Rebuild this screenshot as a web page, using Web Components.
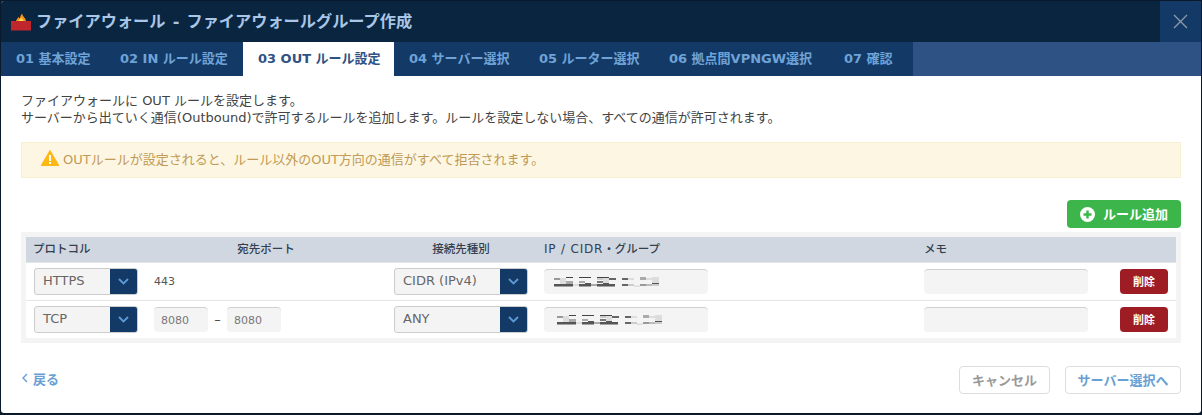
<!DOCTYPE html>
<html lang="ja">
<head>
<meta charset="utf-8">
<title>ファイアウォール</title>
<style>
  html, body { margin: 0; height: 100%; background: #0b1a2a; }
  body { padding: 1px 1px 2px; box-sizing: border-box; height: 415px; overflow: hidden;
    font-family: "DejaVu Sans", "Noto Sans CJK JP", sans-serif; font-size: 13px; color: #444; }
</style>
</head>
<body>
<fw-dialog heading="ファイアウォール - ファイアウォールグループ作成">
  <fw-tabs slot="tabs">
    <fw-tab>01 基本設定</fw-tab>
    <fw-tab>02 IN ルール設定</fw-tab>
    <fw-tab active>03 OUT ルール設定</fw-tab>
    <fw-tab>04 サーバー選択</fw-tab>
    <fw-tab>05 ルーター選択</fw-tab>
    <fw-tab>06 拠点間VPNGW選択</fw-tab>
    <fw-tab>07 確認</fw-tab>
  </fw-tabs>

  <fw-lead>ファイアウォールに OUT ルールを設定します。<br>サーバーから出ていく通信(Outbound)で許可するルールを追加します。ルールを設定しない場合、すべての通信が許可されます。</fw-lead>
  <fw-alert>OUTルールが設定されると、ルール以外のOUT方向の通信がすべて拒否されます。</fw-alert>
  <fw-toolbar><fw-button kind="add">ルール追加</fw-button></fw-toolbar>

  <rule-table>
    <rule-head></rule-head>
    <rule-row protocol="HTTPS" port="443" target="CIDR (IPv4)" shift="0"></rule-row>
    <rule-row protocol="TCP" from="8080" to="8080" target="ANY" shift="3"></rule-row>
  </rule-table>

  <fw-footer slot="footer">
    <fw-back slot="back">戻る</fw-back>
    <fw-button kind="plain">キャンセル</fw-button>
    <fw-button kind="next">サーバー選択へ</fw-button>
  </fw-footer>
</fw-dialog>

<script>
const COLUMNS = "120px 240px 150px 380px 204px 56px";

class FwDialog extends HTMLElement {
  constructor() {
    super();
    this.attachShadow({ mode: "open" });
  }
  connectedCallback() {
    this.shadowRoot.innerHTML = `
      <style>
        :host { display: flex; flex-direction: column; height: 100%; background: #fff; border-radius: 3px; overflow: hidden; }
        header { display: flex; height: 41px; background: #0a2540; }
        .title { flex: 1; display: flex; align-items: center; gap: 4px; padding-left: 9px; color: #a9c6e6; font-size: 16.200px; font-weight: 700; word-spacing: 1.500px; }
        .title span { padding-bottom: 3px; }
        .close { width: 41px; background: #133a66; display: flex; align-items: center; justify-content: center; }
        main { flex: 1; padding: 0 20px; display: flex; flex-direction: column; }
      </style>
      <header>
        <div class="title">
          <svg width="22" height="21" viewBox="0 0 22 21">
            <rect x="1" y="10" width="20" height="9.500" fill="#c0272d"/>
            <path d="M6 10 C6.500 8 8 8 8 6 C9 6.500 9.500 7 10 7.500 C10 5.500 11 4 12 2.500 C12.500 5 14 5.500 14.500 7 C15 7 15.500 8 16 10Z" fill="#f6921e"/>
            <path d="M8.500 10 C9 8.500 10.500 8.500 11 6.500 C12 8 13.500 8.500 13.500 10Z" fill="#ffe04a"/>
          </svg>
          <span>${this.getAttribute("heading")}</span>
        </div>
        <div class="close">
          <svg width="15" height="15" viewBox="0 0 15 15"><path d="M1 1 L14 14 M14 1 L1 14" stroke="#8d9aa8" stroke-width="1.300" fill="none"/></svg>
        </div>
      </header>
      <slot name="tabs"></slot>
      <main><slot></slot></main>
      <slot name="footer"></slot>
    `;
  }
}

class FwTabs extends HTMLElement {
  constructor() {
    super();
    this.attachShadow({ mode: "open" });
    this.shadowRoot.innerHTML = `
      <style>
        :host { display: flex; height: 34px; background: #2f5285; }
        .list { display: grid; grid-template-columns: 104px 138px 151px 130px 130px 175px 84px; background: #133a66; }
      </style>
      <div class="list"><slot></slot></div>
    `;
  }
}

class FwTab extends HTMLElement {
  constructor() {
    super();
    this.attachShadow({ mode: "open" });
    this.shadowRoot.innerHTML = `
      <style>
        :host { display: flex; align-items: center; padding: 0 0 3px 15px; font-size: 13px; font-weight: 700; color: #6fa3d8; white-space: nowrap; }
        :host([active]) { background: #fff; color: #2f5285; }
      </style>
      <slot></slot>
    `;
  }
}

class FwLead extends HTMLElement {
  constructor() {
    super();
    this.attachShadow({ mode: "open" });
    this.shadowRoot.innerHTML = `
      <style>
        :host { display: block; padding-top: 16px; font-size: 13px; line-height: 17px; color: #444; white-space: nowrap; }
      </style>
      <slot></slot>
    `;
  }
}

class FwAlert extends HTMLElement {
  constructor() {
    super();
    this.attachShadow({ mode: "open" });
    this.shadowRoot.innerHTML = `
      <style>
        :host { display: flex; align-items: center; gap: 4px; height: 36px; box-sizing: border-box; margin-top: 16px;
          padding: 0 0 4px 19px; background: #fdf6e3; border: 1px solid #faeed3; color: #c09a56; font-size: 13px; }
      </style>
      <svg width="18" height="16" viewBox="0 0 18 16">
        <path d="M9 0.500 L17.800 15.500 H0.200Z" fill="#fdb813" stroke="#fdb813" stroke-linejoin="round"/>
        <rect x="8" y="5" width="2" height="6" fill="#fff"/>
        <rect x="8" y="12" width="2" height="2" fill="#fff"/>
      </svg>
      <slot></slot>
    `;
  }
}

class FwToolbar extends HTMLElement {
  constructor() {
    super();
    this.attachShadow({ mode: "open" });
    this.shadowRoot.innerHTML = `
      <style>
        :host { display: flex; justify-content: flex-end; margin-top: 22px; }
      </style>
      <slot></slot>
    `;
  }
}

class FwButton extends HTMLElement {
  constructor() {
    super();
    this.attachShadow({ mode: "open" });
  }
  connectedCallback() {
    const plus = this.getAttribute("kind") === "add" ? `
      <svg width="15" height="15" viewBox="0 0 15 15">
        <circle cx="7.500" cy="7.500" r="7.500" fill="#fff"/>
        <path d="M7.500 3.500 V11.500 M3.500 7.500 H11.500" stroke="#3cb54a" stroke-width="2.400"/>
      </svg>` : "";
    this.shadowRoot.innerHTML = `
      <style>
        :host { display: inline-flex; align-items: center; justify-content: center; box-sizing: border-box; padding-bottom: 2px; font-size: 13px; font-weight: 700; border-radius: 4px; white-space: nowrap; }
        :host([kind="add"]) { width: 114px; height: 28px; gap: 8px; background: #3cb54a; color: #fff; }
        :host([kind="delete"]) { width: 48px; height: 25px; background: #9e1c23; color: #fff; font-size: 11px; }
        :host([kind="plain"]) { width: 91px; height: 28px; background: #fff; border: 1px solid #ddd; color: #999; }
        :host([kind="next"]) { width: 116px; height: 28px; margin-left: 15px; background: #fff; border: 1px solid #ddd; color: #6a9fd4; }
        svg { margin-top: 2px; }
      </style>
      ${plus}<slot></slot>
    `;
  }
}

class RuleTable extends HTMLElement {
  constructor() {
    super();
    this.attachShadow({ mode: "open" });
    this.shadowRoot.innerHTML = `
      <style>
        :host { display: block; margin-top: 4px; padding: 5px; background: #f4f4f4; }
      </style>
      <slot></slot>
    `;
  }
}

class RuleHead extends HTMLElement {
  constructor() {
    super();
    this.attachShadow({ mode: "open" });
    this.shadowRoot.innerHTML = `
      <style>
        :host { display: grid; grid-template-columns: ${COLUMNS}; align-items: center; height: 26px; box-sizing: border-box; padding-bottom: 3px;
          background: #d0d7e0; border-bottom: 1px solid #e2e6eb; font-size: 11.500px; font-weight: 500; color: #34404f; }
        div { padding-left: 7px; }
        .mid { text-align: center; padding: 0; }
        .ip { padding-left: 8px; }
        .wide { font-size: 12px; letter-spacing: 0.800px; }
      </style>
      <div>プロトコル</div>
      <div class="mid">宛先ポート</div>
      <div class="mid">接続先種別</div>
      <div class="ip"><span class="wide">IP / CIDR</span>・グループ</div>
      <div class="ip">メモ</div>
      <div></div>
    `;
  }
}

class FwSelect extends HTMLElement {
  constructor() {
    super();
    this.attachShadow({ mode: "open" });
    this.shadowRoot.innerHTML = `
      <style>
        :host { display: flex; box-sizing: border-box; height: 27px; background: #f4f4f4; border: 1px solid #ccc; border-radius: 3px; overflow: hidden; font-size: 13px; color: #666; }
        .value { flex: 1; padding-left: 8px; line-height: 24px; white-space: nowrap; }
        .arrow { width: 27px; background: #133a66; display: flex; align-items: center; justify-content: center; }
      </style>
      <div class="value"><slot></slot></div>
      <div class="arrow"><svg width="11" height="7" viewBox="0 0 11 7"><path d="M1 1 L5.500 5.500 L10 1" stroke="#5e9bd6" stroke-width="1.800" fill="none"/></svg></div>
    `;
  }
}

class FwInput extends HTMLElement {
  constructor() {
    super();
    this.attachShadow({ mode: "open" });
    this.shadowRoot.innerHTML = `
      <style>
        :host { display: flex; align-items: center; box-sizing: border-box; height: 25px; padding-left: 7px; background: #f4f4f4; border-top: 1px solid #d0d0d0; border-radius: 4px; font-size: 11px; color: #777; }
      </style>
      <slot></slot>
    `;
  }
}

// the IP value is pixelated out in the screenshot, so it is drawn as mosaic blocks
const MOSAIC = [
  ["#999", 0, 1, 6, 2], ["#ddd", 6, 1, 6, 6], ["#444", 12, 0, 7, 1], ["#aaa", 12, 4, 7, 3],
  ["#555", 0, 7, 19, 2.5], ["#ddd", 19, 7, 6, 2], ["#444", 25, 0, 12, 1], ["#aaa", 25, 4, 6, 2],
  ["#555", 31, 6, 6, 1], ["#555", 25, 7, 12, 2.5], ["#aaa", 37, 7, 6, 2], ["#444", 43, 0, 12, 1],
  ["#ccc", 43, 1, 6, 2], ["#777", 43, 4, 6, 2], ["#ddd", 49, 1, 6, 5], ["#555", 49, 6, 6, 1],
  ["#555", 43, 7, 18, 2.5], ["#666", 55, 1, 7, 2], ["#666", 68, 1, 6, 2], ["#ddd", 74, 1, 6, 2],
  ["#666", 68, 7, 6, 2], ["#ccc", 74, 7, 6, 2], ["#ddd", 80, 8.5, 6, 1.5], ["#aaa", 86, 0, 6, 3],
  ["#999", 86, 7, 6, 2], ["#ddd", 92, 1, 6, 2], ["#bbb", 92, 7, 6, 2], ["#ddd", 98, 0, 7, 6],
  ["#555", 98, 6, 7, 1], ["#ccc", 98, 7, 7, 2],
];

class FwMosaic extends HTMLElement {
  constructor() {
    super();
    this.attachShadow({ mode: "open" });
    const blocks = MOSAIC.map(([fill, x, y, w, h]) => `<rect fill="${fill}" x="${x}" y="${y}" width="${w}" height="${h}"/>`).join("");
    this.shadowRoot.innerHTML = `
      <style>
        :host { display: block; line-height: 0; }
      </style>
      <svg width="105" height="10" viewBox="0 0 105 10">${blocks}</svg>
    `;
  }
}

class RuleRow extends HTMLElement {
  constructor() {
    super();
    this.attachShadow({ mode: "open" });
  }
  connectedCallback() {
    const from = this.getAttribute("from");
    const port = from
      ? `<div class="range"><fw-input>${from}</fw-input><span>–</span><fw-input>${this.getAttribute("to")}</fw-input></div>`
      : `<div class="fixed">${this.getAttribute("port")}</div>`;
    this.shadowRoot.innerHTML = `
      <style>
        :host { display: grid; grid-template-columns: ${COLUMNS}; align-items: center; height: 38px; box-sizing: border-box; background: #fff; border-bottom: 1px solid #e6e6e6; }
        :host(:last-child) { height: 37px; border-bottom: 0; }
        .cell { padding: 0 8px; }
        .range { display: grid; grid-template-columns: 54px 19px 54px; align-items: center; text-align: center; color: #444; }
        .fixed { font-size: 11px; color: #555; }
        .act { display: flex; }
        fw-mosaic { margin-left: ${Number(this.getAttribute("shift")) + 3}px; }
      </style>
      <div class="cell"><fw-select>${this.getAttribute("protocol")}</fw-select></div>
      <div class="cell">${port}</div>
      <div class="cell"><fw-select>${this.getAttribute("target")}</fw-select></div>
      <div class="cell" style="padding-right:208px"><fw-input><fw-mosaic></fw-mosaic></fw-input></div>
      <div class="cell" style="padding-right:32px"><fw-input></fw-input></div>
      <div class="act"><fw-button kind="delete">削除</fw-button></div>
    `;
  }
}

class FwFooter extends HTMLElement {
  constructor() {
    super();
    this.attachShadow({ mode: "open" });
    this.shadowRoot.innerHTML = `
      <style>
        :host { display: flex; align-items: center; padding: 0 20px 19px; margin-top: auto; }
        .side { flex: 1; }
      </style>
      <div class="side"><slot name="back"></slot></div>
      <slot></slot>
    `;
  }
}

class FwBack extends HTMLElement {
  constructor() {
    super();
    this.attachShadow({ mode: "open" });
    this.shadowRoot.innerHTML = `
      <style>
        :host { display: flex; align-items: center; gap: 5px; margin: 0 0 4px 1px; font-size: 13px; font-weight: 700; color: #6a9fd4; }
      </style>
      <svg width="6" height="10" viewBox="0 0 6 10"><path d="M5 1 L1 5 L5 9" stroke="#6a9fd4" stroke-width="1.400" fill="none"/></svg>
      <slot></slot>
    `;
  }
}

customElements.define("fw-dialog", FwDialog);
customElements.define("fw-tabs", FwTabs);
customElements.define("fw-tab", FwTab);
customElements.define("fw-lead", FwLead);
customElements.define("fw-alert", FwAlert);
customElements.define("fw-toolbar", FwToolbar);
customElements.define("fw-button", FwButton);
customElements.define("rule-table", RuleTable);
customElements.define("rule-head", RuleHead);
customElements.define("fw-select", FwSelect);
customElements.define("fw-input", FwInput);
customElements.define("fw-mosaic", FwMosaic);
customElements.define("rule-row", RuleRow);
customElements.define("fw-footer", FwFooter);
customElements.define("fw-back", FwBack);
</script>
</body>
</html>
